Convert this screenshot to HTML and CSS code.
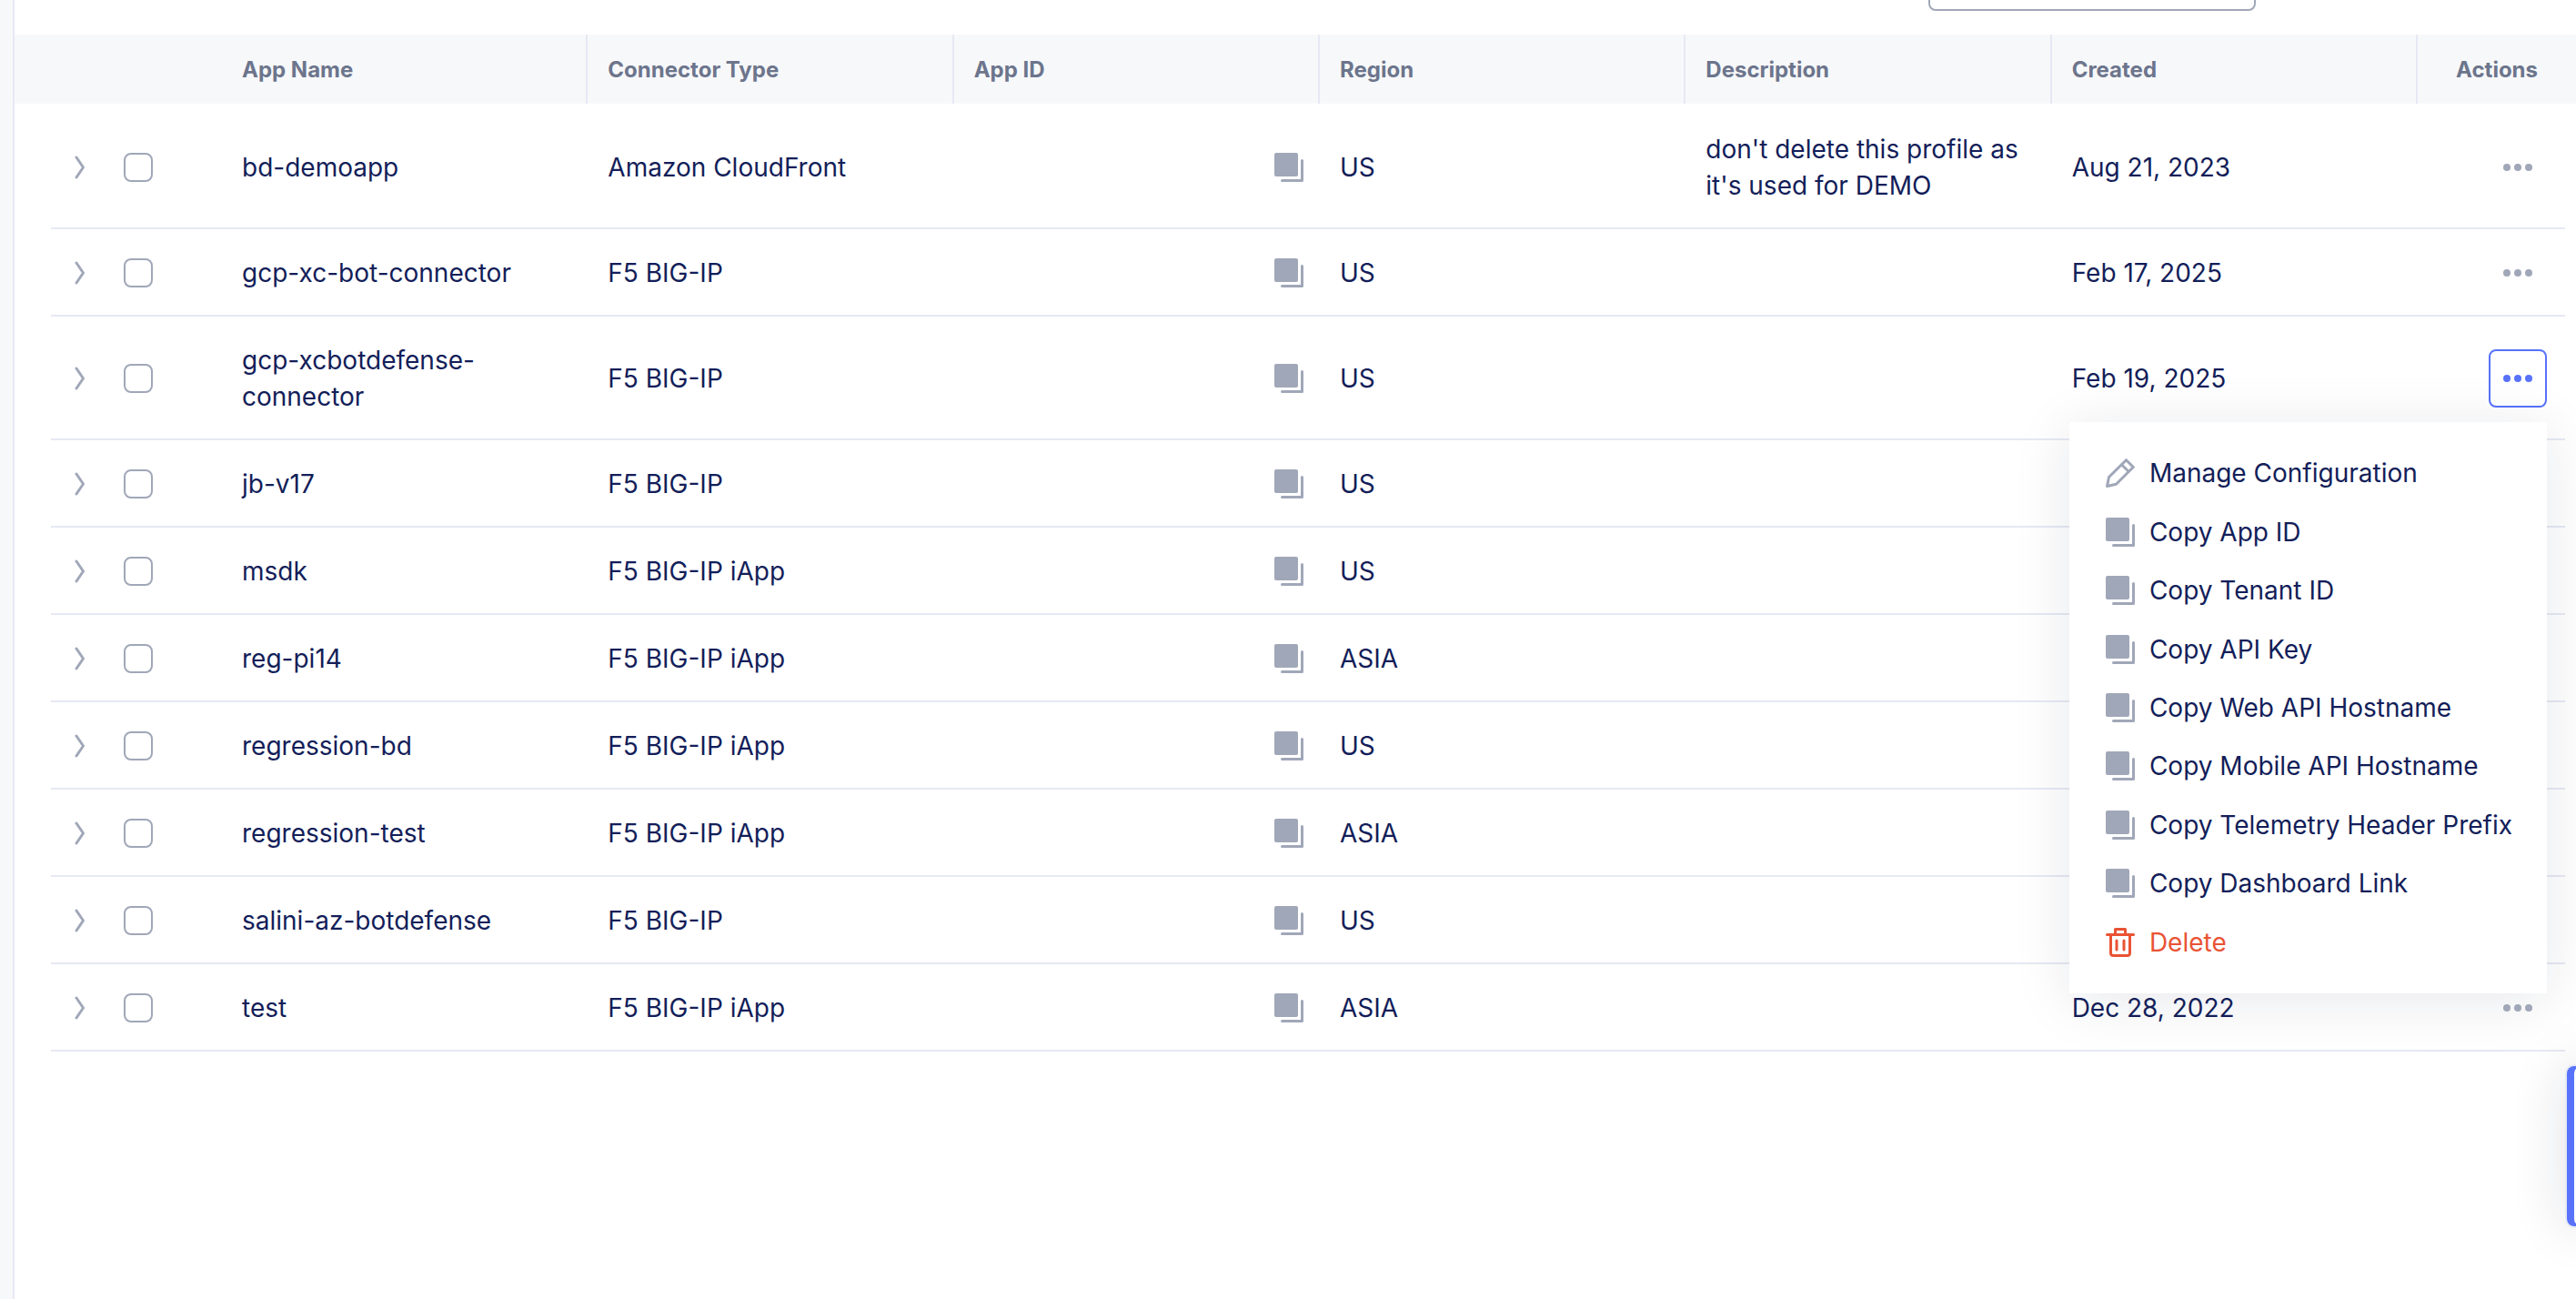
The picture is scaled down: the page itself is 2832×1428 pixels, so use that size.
FILE: index.html
```
<!DOCTYPE html>
<html lang="en">
<head>
<meta charset="utf-8">
<meta name="viewport" content="width=device-width, initial-scale=1">
<title>Applications</title>
<link rel="stylesheet" href="styles.css">
</head>
<body>
<svg class="sprite" aria-hidden="true">
  <symbol id="chevron" viewBox="0 0 12 26"><path d="M2 2l7.500 11L2 24" fill="none" stroke="currentColor" stroke-width="3" stroke-linecap="round" stroke-linejoin="round"/></symbol>
  <symbol id="copy" viewBox="0 0 32 32"><rect width="26" height="26" rx="2" fill="currentColor"/><path d="M30.500 8.500v22h-22" fill="none" stroke="currentColor" stroke-width="3" stroke-linecap="round" stroke-linejoin="round"/></symbol>
  <symbol id="dots" viewBox="0 0 32 8"><circle cx="4" cy="4" r="4" fill="currentColor"/><circle cx="16" cy="4" r="4" fill="currentColor"/><circle cx="28" cy="4" r="4" fill="currentColor"/></symbol>
  <symbol id="pencil" viewBox="0 0 32 32"><path d="M22.500 1.700l7.800 7.800L11.500 28.300 1.500 30.500 3.500 20.500zM17.500 6.700l7.800 7.800" fill="none" stroke="currentColor" stroke-width="3" stroke-linejoin="round"/></symbol>
  <symbol id="trash" viewBox="0 0 32 32"><path d="M1.500 7.500h29M10.500 7V1.500h11V7M5.500 8v19.500q0 3 3 3h15q3 0 3-3V8M12 14v10M20 14v10" fill="none" stroke="currentColor" stroke-width="3" stroke-linecap="round" stroke-linejoin="round"/></symbol>
</svg>
<div class="app">
  <aside class="rail"></aside>
  <main class="content">
    <div class="toolbar"><input class="search" type="search" aria-label="Search"></div>
    <div class="table-wrap">
      <table class="apps">
        <colgroup><col class="col-toggle"><col class="col-check"><col><col><col><col><col><col><col class="col-actions"></colgroup>
        <thead>
          <tr><th class="plain"></th><th class="plain"></th><th>App Name</th><th>Connector Type</th><th>App ID</th><th>Region</th><th>Description</th><th>Created</th><th class="actions">Actions</th></tr>
        </thead>
        <tbody>
          <tr><td class="toggle"><button class="expand" aria-label="Expand"><svg><use href="#chevron"/></svg></button></td><td class="check"><input type="checkbox" aria-label="Select bd-demoapp"></td><td>bd-demoapp</td><td>Amazon CloudFront</td><td class="id"><button class="copy" aria-label="Copy App ID"><svg><use href="#copy"/></svg></button></td><td>US</td><td>don't delete this profile as it's used for DEMO</td><td>Aug 21, 2023</td><td class="actions"><button class="more" aria-label="Actions"><svg><use href="#dots"/></svg></button></td></tr>
          <tr><td class="toggle"><button class="expand" aria-label="Expand"><svg><use href="#chevron"/></svg></button></td><td class="check"><input type="checkbox" aria-label="Select gcp-xc-bot-connector"></td><td>gcp-xc-bot-connector</td><td>F5 BIG-IP</td><td class="id"><button class="copy" aria-label="Copy App ID"><svg><use href="#copy"/></svg></button></td><td>US</td><td></td><td>Feb 17, 2025</td><td class="actions"><button class="more" aria-label="Actions"><svg><use href="#dots"/></svg></button></td></tr>
          <tr><td class="toggle"><button class="expand" aria-label="Expand"><svg><use href="#chevron"/></svg></button></td><td class="check"><input type="checkbox" aria-label="Select gcp-xcbotdefense-connector"></td><td>gcp-xcbotdefense-connector</td><td>F5 BIG-IP</td><td class="id"><button class="copy" aria-label="Copy App ID"><svg><use href="#copy"/></svg></button></td><td>US</td><td></td><td>Feb 19, 2025</td><td class="actions"><div class="menu-anchor"><button class="more open" aria-label="Actions" aria-expanded="true"><svg><use href="#dots"/></svg></button>
            <div class="menu" role="menu">
              <button role="menuitem"><svg><use href="#pencil"/></svg>Manage Configuration</button>
              <button role="menuitem"><svg><use href="#copy"/></svg>Copy App ID</button>
              <button role="menuitem"><svg><use href="#copy"/></svg>Copy Tenant ID</button>
              <button role="menuitem"><svg><use href="#copy"/></svg>Copy API Key</button>
              <button role="menuitem"><svg><use href="#copy"/></svg>Copy Web API Hostname</button>
              <button role="menuitem"><svg><use href="#copy"/></svg>Copy Mobile API Hostname</button>
              <button role="menuitem"><svg><use href="#copy"/></svg>Copy Telemetry Header Prefix</button>
              <button role="menuitem"><svg><use href="#copy"/></svg>Copy Dashboard Link</button>
              <button role="menuitem" class="danger"><svg><use href="#trash"/></svg>Delete</button>
            </div></div></td></tr>
          <tr><td class="toggle"><button class="expand" aria-label="Expand"><svg><use href="#chevron"/></svg></button></td><td class="check"><input type="checkbox" aria-label="Select jb-v17"></td><td>jb-v17</td><td>F5 BIG-IP</td><td class="id"><button class="copy" aria-label="Copy App ID"><svg><use href="#copy"/></svg></button></td><td>US</td><td></td><td></td><td></td></tr>
          <tr><td class="toggle"><button class="expand" aria-label="Expand"><svg><use href="#chevron"/></svg></button></td><td class="check"><input type="checkbox" aria-label="Select msdk"></td><td>msdk</td><td>F5 BIG-IP iApp</td><td class="id"><button class="copy" aria-label="Copy App ID"><svg><use href="#copy"/></svg></button></td><td>US</td><td></td><td></td><td></td></tr>
          <tr><td class="toggle"><button class="expand" aria-label="Expand"><svg><use href="#chevron"/></svg></button></td><td class="check"><input type="checkbox" aria-label="Select reg-pi14"></td><td>reg-pi14</td><td>F5 BIG-IP iApp</td><td class="id"><button class="copy" aria-label="Copy App ID"><svg><use href="#copy"/></svg></button></td><td>ASIA</td><td></td><td></td><td></td></tr>
          <tr><td class="toggle"><button class="expand" aria-label="Expand"><svg><use href="#chevron"/></svg></button></td><td class="check"><input type="checkbox" aria-label="Select regression-bd"></td><td>regression-bd</td><td>F5 BIG-IP iApp</td><td class="id"><button class="copy" aria-label="Copy App ID"><svg><use href="#copy"/></svg></button></td><td>US</td><td></td><td></td><td></td></tr>
          <tr><td class="toggle"><button class="expand" aria-label="Expand"><svg><use href="#chevron"/></svg></button></td><td class="check"><input type="checkbox" aria-label="Select regression-test"></td><td>regression-test</td><td>F5 BIG-IP iApp</td><td class="id"><button class="copy" aria-label="Copy App ID"><svg><use href="#copy"/></svg></button></td><td>ASIA</td><td></td><td></td><td></td></tr>
          <tr><td class="toggle"><button class="expand" aria-label="Expand"><svg><use href="#chevron"/></svg></button></td><td class="check"><input type="checkbox" aria-label="Select salini-az-botdefense"></td><td>salini-az-botdefense</td><td>F5 BIG-IP</td><td class="id"><button class="copy" aria-label="Copy App ID"><svg><use href="#copy"/></svg></button></td><td>US</td><td></td><td></td><td></td></tr>
          <tr><td class="toggle"><button class="expand" aria-label="Expand"><svg><use href="#chevron"/></svg></button></td><td class="check"><input type="checkbox" aria-label="Select test"></td><td>test</td><td>F5 BIG-IP iApp</td><td class="id"><button class="copy" aria-label="Copy App ID"><svg><use href="#copy"/></svg></button></td><td>ASIA</td><td></td><td class="raised">Dec 28, 2022</td><td class="actions"><button class="more raised" aria-label="Actions"><svg><use href="#dots"/></svg></button></td></tr>
        </tbody>
      </table>
    </div>
  </main>
  <div class="drawer"><div class="drawer-edge"><div class="drawer-body"></div></div></div>
</div>
</body>
</html>
```
FILE: styles.css
```
:root {
  --ink: #131e59;
  --muted: #a0a7b8;
  --head: #6c758c;
  --line: #e6e9f3;
  --surface: #f7f8fa;
  --accent: #5872fa;
  --danger: #e95334;
}
* { box-sizing: border-box; }
body {
  margin: 0;
  background: #fff;
  color: var(--ink);
  font-family: Inter, "Liberation Sans", sans-serif;
  font-size: 28px;
  line-height: 40px;
}
button {
  padding: 0;
  border: 0;
  background: none;
  color: inherit;
  font: inherit;
  cursor: pointer;
}
svg { display: block; }
.sprite { display: none; }

.app {
  position: relative;
  display: flex;
  min-height: 100vh;
  overflow: hidden;
}
.rail {
  flex: 0 0 16px;
  background: var(--surface);
  border-right: 2px solid var(--line);
}
.content { flex: 1; min-width: 0; }

/* The toolbar is scrolled most of the way out of view */
.toolbar {
  display: flex;
  justify-content: flex-end;
  align-items: flex-end;
  height: 38px;
  padding: 0 352px 26px 0;
}
.search {
  flex: none;
  width: 360px;
  height: 72px;
  margin: 0;
  padding: 0 24px;
  border: 2px solid var(--muted);
  border-radius: 8px;
  background: #fff;
  font: inherit;
}

.table-wrap { padding: 0 12px 0 40px; }
.apps {
  width: 100%;
  table-layout: fixed;
  border-collapse: separate;
  border-spacing: 0;
}
.col-toggle { width: 60px; }
.col-check { width: 128px; }
.col-actions { width: 162px; }
th {
  height: 76px;
  padding: 2px 22px 0;
  border-right: 2px solid var(--line);
  background: var(--surface);
  color: var(--head);
  font-size: 24px;
  font-weight: 700;
  text-align: left;
}
th.plain { border-right: 0; }
th:first-child { box-shadow: -40px 0 0 var(--surface); }
th.actions {
  padding: 2px 30px 0 0;
  border-right: 0;
  box-shadow: 12px 0 0 var(--surface);
  text-align: right;
}
td {
  padding: 28px 22px 26px;
  border-bottom: 2px solid var(--line);
  vertical-align: middle;
}
tbody tr:first-child td { border-top: 2px solid transparent; }
td.toggle { padding: 2px 0 0 26px; }
td.check { padding: 2px 0 0 20px; }
td.id { padding: 2px 18px 0 0; }
td.actions { padding: 2px 20px 0 0; }

.expand { display: block; color: var(--muted); }
.expand svg { width: 12px; height: 26px; }
.check input {
  appearance: none;
  display: block;
  width: 32px;
  height: 32px;
  margin: 0;
  border: 2px solid var(--muted);
  border-radius: 8px;
  background: #fff;
}
.copy { display: block; margin-left: auto; color: var(--muted); }
.copy svg { width: 32px; height: 32px; }

.more {
  display: grid;
  place-items: center;
  width: 64px;
  height: 64px;
  margin-left: auto;
  border: 2px solid transparent;
  border-radius: 8px;
  color: var(--muted);
}
.more svg { width: 32px; height: 8px; }
.more.open { border-color: var(--accent); color: var(--accent); }
.raised { position: relative; z-index: 3; }

.menu-anchor { position: relative; }
.menu {
  position: absolute;
  z-index: 2;
  top: calc(100% + 16px);
  right: 0;
  display: grid;
  grid-auto-rows: 1fr;
  min-height: 628px;
  padding: 24px 38px 24px 40px;
  background: #fff;
  box-shadow: 0 8px 60px rgba(20, 30, 60, 0.1);
}
.menu button {
  display: flex;
  align-items: center;
  gap: 16px;
  white-space: nowrap;
}
.menu svg { flex: none; width: 32px; height: 32px; color: var(--muted); }
.menu .danger, .menu .danger svg { color: var(--danger); }

/* Collapsed side drawer peeking in from the right edge */
.drawer {
  position: absolute;
  top: 1170px;
  right: -28px;
  width: 40px;
  height: 180px;
  border: 2px solid var(--line);
  border-radius: 10px;
  box-shadow: 0 0 60px rgba(20, 30, 60, 0.14);
}
.drawer-edge {
  height: 100%;
  padding-left: 8px;
  border-radius: 8px;
  background: var(--accent);
}
.drawer-body {
  height: 100%;
  border-radius: 8px;
  background: #fff;
}
```
